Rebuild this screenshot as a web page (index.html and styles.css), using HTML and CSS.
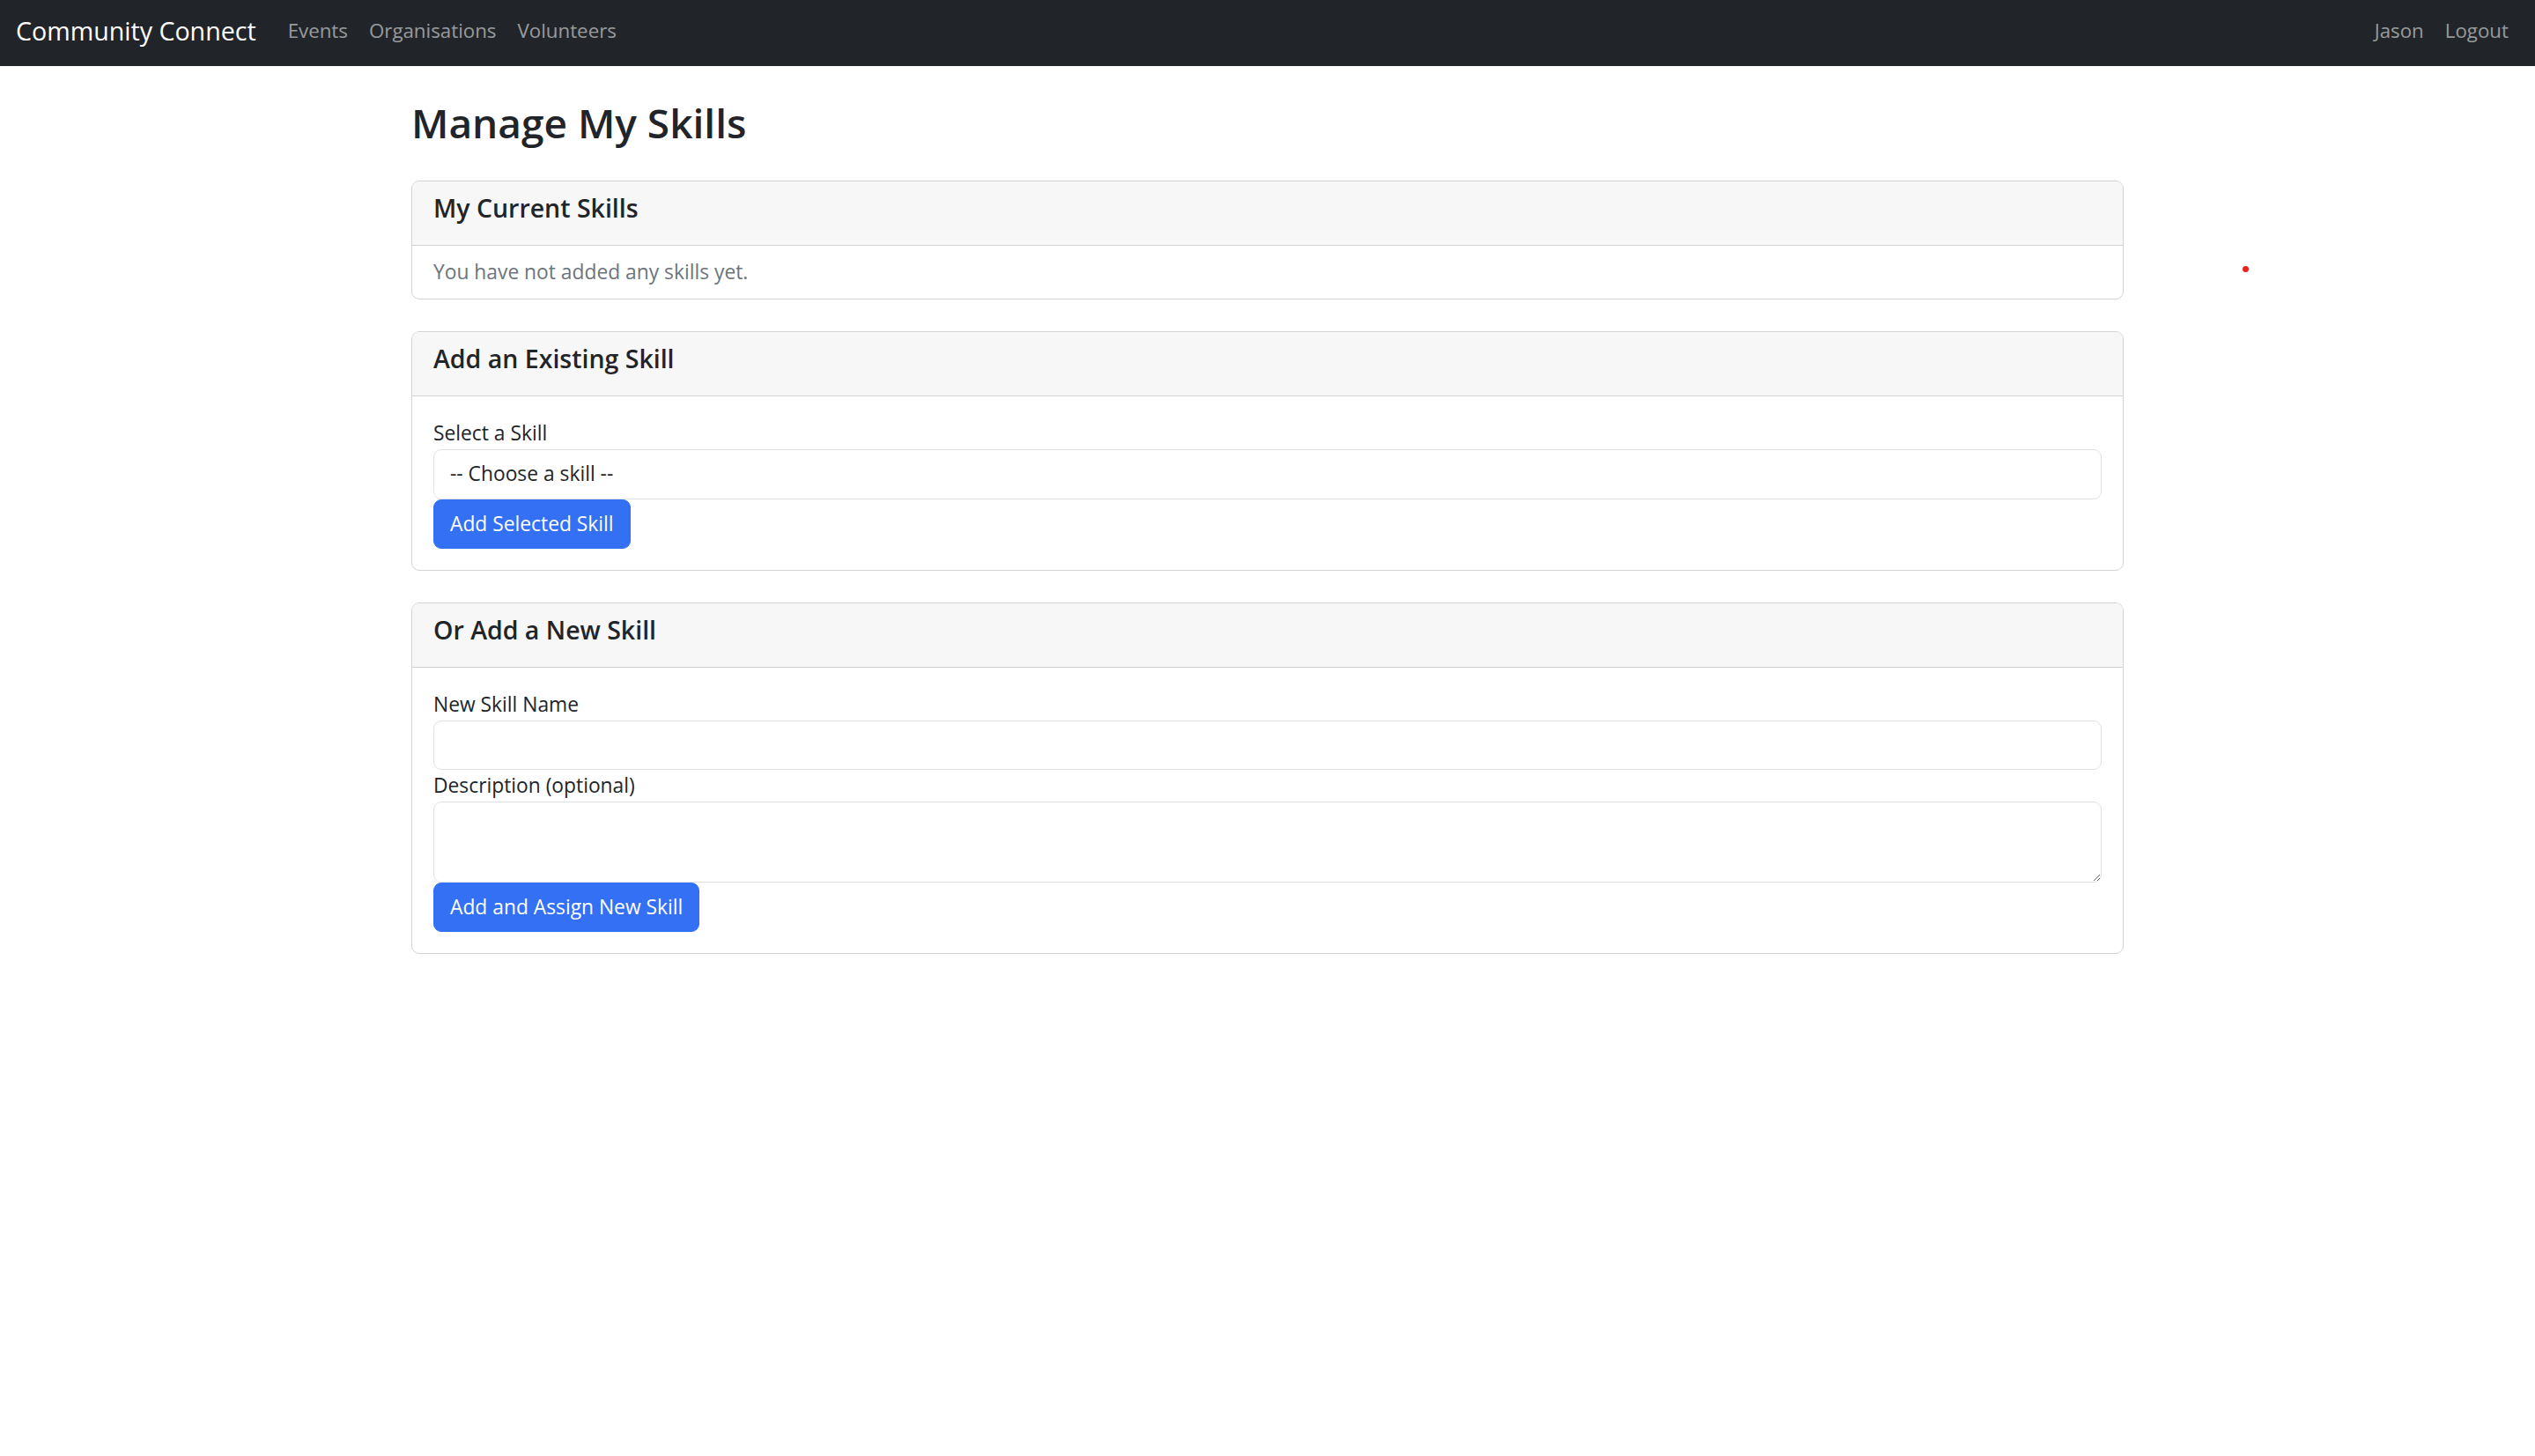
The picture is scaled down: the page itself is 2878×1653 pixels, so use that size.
FILE: index.html
```html
<!DOCTYPE html>
<html lang="en">
<head>
<meta charset="utf-8">
<title>Manage My Skills - Community Connect</title>
<link rel="stylesheet" href="styles.css">
</head>
<body>
<nav class="navbar">
  <a class="brand" href="#">Community Connect</a>
  <ul class="nav-links">
    <li><a href="#">Events</a></li>
    <li><a href="#">Organisations</a></li>
    <li><a href="#">Volunteers</a></li>
  </ul>
  <ul class="nav-links nav-right">
    <li><a href="#">Jason</a></li>
    <li><a href="#">Logout</a></li>
  </ul>
</nav>

<main class="container">
  <h2 class="page-title">Manage My Skills</h2>

  <section class="card">
    <div class="card-header"><h5 class="card-title">My Current Skills</h5></div>
    <ul class="list-group">
      <li class="list-item muted">You have not added any skills yet.</li>
    </ul>
  </section>

  <section class="card">
    <div class="card-header"><h5 class="card-title">Add an Existing Skill</h5></div>
    <form class="card-body">
      <label class="form-label" for="skill">Select a Skill</label>
      <select id="skill" class="form-control form-select">
        <option>-- Choose a skill --</option>
      </select>
      <button type="button" class="btn">Add Selected Skill</button>
    </form>
  </section>

  <section class="card">
    <div class="card-header"><h5 class="card-title">Or Add a New Skill</h5></div>
    <form class="card-body">
      <label class="form-label" for="name">New Skill Name</label>
      <input id="name" class="form-control" type="text">
      <label class="form-label" for="desc">Description (optional)</label>
      <textarea id="desc" class="form-control textarea" rows="2"></textarea>
      <button type="button" class="btn">Add and Assign New Skill</button>
    </form>
  </section>
</main>

<div class="cursor-dot"></div>
</body>
</html>
```

FILE: styles.css
```css
* { box-sizing: border-box; }

html, body {
  margin: 0;
  padding: 0;
  background: #fff;
}

body {
  font-family: "Open Sans", "Noto Sans", "Liberation Sans", sans-serif;
  font-size: 22.8px;
  line-height: 36px;
  color: #212529;
  position: relative;
  min-height: 1653px;
}

a { text-decoration: none; }

/* Navbar */
.navbar {
  height: 75px;
  background: #212529;
  display: flex;
  align-items: center;
  padding: 0 18px 6px;
}

.brand {
  font-size: 28.6px;
  line-height: 45px;
  color: #fff;
  margin-right: 24px;
}

.nav-links {
  list-style: none;
  margin: 0;
  padding: 0;
  display: flex;
}

.nav-links a {
  display: block;
  padding: 0 12px;
  color: rgba(255, 255, 255, 0.55);
  font-size: 22.3px;
  line-height: 36px;
}

.nav-right { margin-left: auto; }

/* Content */
.container {
  max-width: 1980px;
  margin: 0 auto;
  padding: 36px 18px 0;
}

.page-title {
  font-size: 46px;
  line-height: 57.6px;
  font-weight: 600;
  margin: 0 0 36px;
}

.card {
  border: 1px solid #d3d3d3;
  border-radius: 9px;
  margin-bottom: 36px;
  overflow: hidden;
  background: #fff;
}

.card-header {
  background: #f7f7f7;
  border-bottom: 1px solid #d3d3d3;
  padding: 12px 24px;
}

.card-title {
  font-size: 28.5px;
  line-height: 36px;
  font-weight: 600;
  margin: 0 0 12px;
}

.list-group {
  list-style: none;
  margin: 0;
  padding: 0;
}

.list-item {
  padding: 12px 24px;
}

.muted { color: #6c757d; }

.card-body {
  padding: 24px;
  display: flex;
  flex-direction: column;
  align-items: flex-start;
  margin: 0;
}

.form-label {
  display: block;
  line-height: 36px;
}

.form-control {
  display: block;
  width: 100%;
  height: 56px;
  padding: 9px 18px;
  font-family: inherit;
  font-size: 22.8px;
  line-height: 36px;
  color: #212529;
  background: #fff;
  border: 1px solid #dee2e6;
  border-radius: 9px;
  appearance: none;
  -webkit-appearance: none;
  margin: 0;
}

.form-select { height: 57px; }

.textarea {
  height: 92px;
  resize: vertical;
}

.btn {
  display: inline-block;
  font-family: inherit;
  font-size: 22.8px;
  line-height: 36px;
  padding: 9px 18px;
  color: #fff;
  background: #3370f4;
  border: 1px solid #3370f4;
  border-radius: 9px;
  margin: 0;
}

.cursor-dot {
  position: absolute;
  left: 2546px;
  top: 302px;
  width: 7px;
  height: 7px;
  border-radius: 50%;
  background: #e32222;
}
```
